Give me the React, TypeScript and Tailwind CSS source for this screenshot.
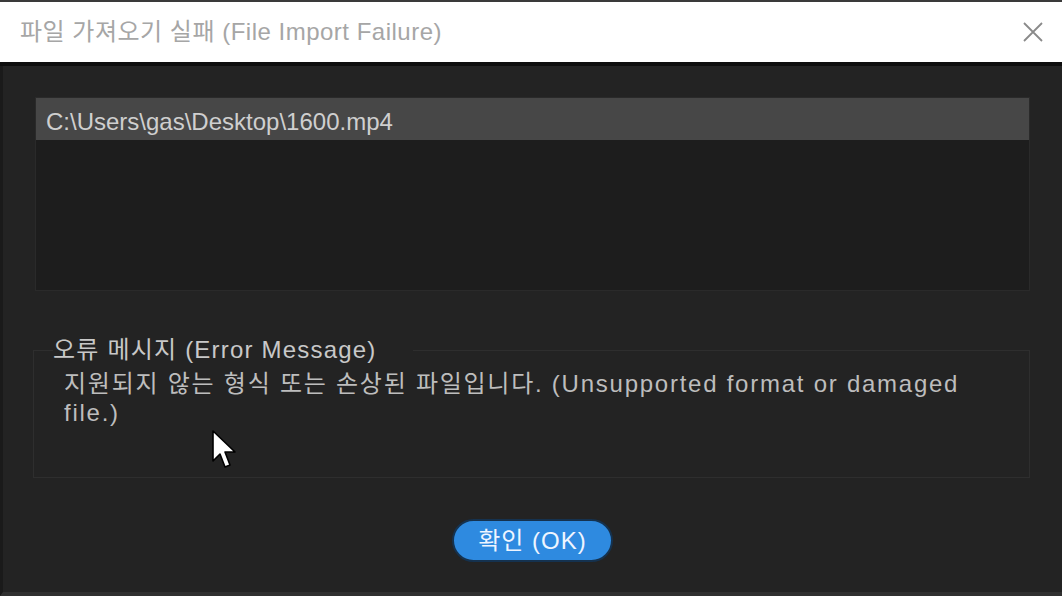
import React from "react";

const FONT = { fontFamily: '"Liberation Sans", "Noto Sans CJK KR", sans-serif' };

export default function App() {
  return (
    <div
      className="relative w-[1062px] h-[596px] overflow-hidden bg-[#232323] flex flex-col"
      style={FONT}
    >
      {/* Title bar */}
      <div className="h-[2px] bg-[#3a3a3a]" />
      <div className="h-[60px] bg-white flex items-center justify-between pl-[20px] pr-[20px]">
        <span className="text-[24px] text-[#a6a6a6] tracking-[0.5px]">
          파일 가져오기 실패 (File Import Failure)
        </span>
        <svg width="22" height="22" viewBox="0 0 22 22" className="mr-[-2px]">
          <path d="M2 2 L20 20 M20 2 L2 20" stroke="#8a8a8a" strokeWidth="1.8" />
        </svg>
      </div>
      <div className="h-[4px] bg-[#0e0e0e]" />

      {/* Body */}
      <div className="flex-1 flex flex-col border-l-[3px] border-[#1a1a1a] border-b-[4px] border-b-[#303030]">
        <div className="mt-[31px] ml-[32px] mr-[32px] h-[194px] bg-[#1d1d1d] border border-[#2a2a2a]">
          <div className="h-[42px] bg-[#474747] flex items-center pl-[10px] pt-[6px] text-[24px] text-[#cfcfcf]">
            C:\Users\gas\Desktop\1600.mp4
          </div>
        </div>

        <fieldset className="mt-[46px] ml-[30px] mr-[32px] h-[141px] border border-[#2e2e2e] px-[19px] pt-0">
          <legend className="text-[24px] text-[#c8c8c8] pr-[36px] tracking-[1.2px] leading-[26px]">
            오류 메시지 (Error Message)
          </legend>
          <div className="pl-[11px] mt-[6px] text-[24px] leading-[29px] text-[#bdbdbd] tracking-[1.75px]">
            지원되지 않는 형식 또는 손상된 파일입니다. (Unsupported format or damaged
            <br />
            file.)
          </div>
        </fieldset>

        <div className="flex justify-center mt-[41px]">
          <button className="w-[161px] h-[43px] rounded-full bg-[#2e8ae0] border-2 border-[#15324f] text-[24px] text-[#eef5ff] flex items-center justify-center tracking-[1px]">
            확인 (OK)
          </button>
        </div>
      </div>

      {/* Mouse cursor */}
      <svg
        className="absolute left-[211px] top-[429px]"
        width="26"
        height="44"
        viewBox="0 0 26 44"
      >
        <path
          d="M2 2 L2 32 L9 25 L14 38 L19 36 L14 23 L24 23 Z"
          fill="#ffffff"
          stroke="#000000"
          strokeWidth="1.6"
          strokeLinejoin="round"
        />
      </svg>
    </div>
  );
}
